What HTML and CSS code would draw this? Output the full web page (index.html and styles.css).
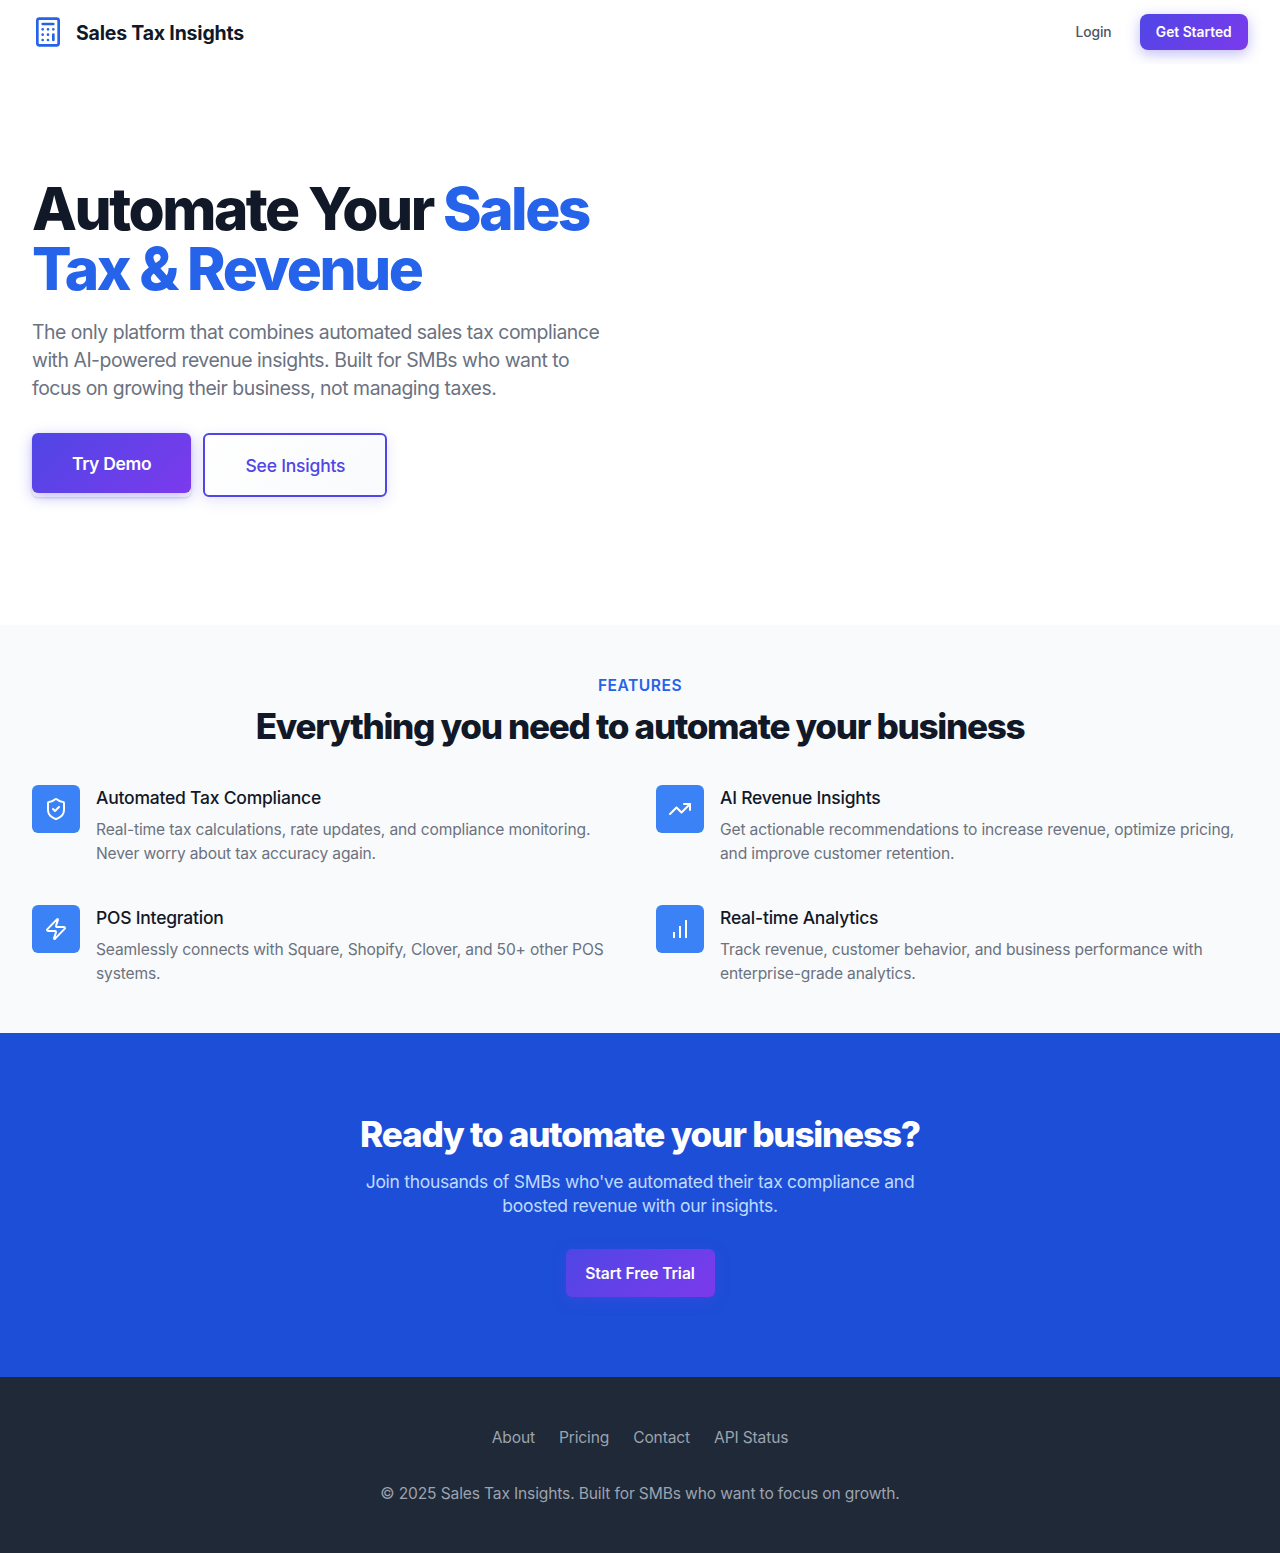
FILE: index.html
```html
<!DOCTYPE html>
<html lang="en">
<head>
<meta charset="utf-8">
<title>Sales Tax Insights</title>
<link rel="stylesheet" href="styles.css">
</head>
<body>
<header class="nav">
  <a class="brand" href="#">
    <svg class="brand-icon" viewBox="0 0 24 24"><rect x="4" y="2" width="16" height="20" rx="1.6"/><path d="M8 6h8M16 14v4M16 10h.01M12 10h.01M8 10h.01M12 14h.01M8 14h.01M12 18h.01M8 18h.01"/></svg>
    <span class="brand-name">Sales Tax Insights</span>
  </a>
  <nav class="nav-actions">
    <a class="login" href="#">Login</a>
    <a class="btn btn-small" href="#">Get Started</a>
  </nav>
</header>
<main>
  <section class="hero">
    <div class="hero-copy">
      <h1 class="hero-title">Automate Your <span class="accent">Sales<br>Tax &amp; Revenue</span></h1>
      <p class="hero-text">The only platform that combines automated sales tax compliance<br>with AI-powered revenue insights. Built for SMBs who want to<br>focus on growing their business, not managing taxes.</p>
      <div class="hero-actions">
        <div class="btn-shell"><a class="btn btn-large" href="#">Try Demo</a></div>
        <a class="btn-outline" href="#">See Insights</a>
      </div>
    </div>
  </section>
  <section class="features">
    <p class="eyebrow">FEATURES</p>
    <h2 class="section-title">Everything you need to automate your business</h2>
    <div class="feature-grid">
      <article class="feature">
        <span class="tile"><svg viewBox="0 0 24 24"><path d="M20 13c0 5-3.500 7.500-7.660 8.950a1 1 0 0 1-.67-.01C7.500 20.500 4 18 4 13V6a1 1 0 0 1 1-1c2 0 4.500-1.200 6.240-2.720a1.170 1.170 0 0 1 1.520 0C14.510 3.810 17 5 19 5a1 1 0 0 1 1 1z"/><path d="m9 12 2 2 4-4"/></svg></span>
        <div><h3 class="feature-title">Automated Tax Compliance</h3><p class="feature-text">Real-time tax calculations, rate updates, and compliance monitoring.<br>Never worry about tax accuracy again.</p></div>
      </article>
      <article class="feature">
        <span class="tile"><svg viewBox="0 0 24 24"><path d="m22 7-8.500 8.500-5-5L2 17"/><path d="M16 7h6v6"/></svg></span>
        <div><h3 class="feature-title">AI Revenue Insights</h3><p class="feature-text">Get actionable recommendations to increase revenue, optimize pricing,<br>and improve customer retention.</p></div>
      </article>
      <article class="feature">
        <span class="tile"><svg viewBox="0 0 24 24"><path d="M4 14a1 1 0 0 1-.78-1.630l9.900-10.200a.5.5 0 0 1 .86.460l-1.920 6.020A1 1 0 0 0 13 10h7a1 1 0 0 1 .78 1.630l-9.900 10.200a.5.5 0 0 1-.86-.460l1.920-6.020A1 1 0 0 0 11 14z"/></svg></span>
        <div><h3 class="feature-title">POS Integration</h3><p class="feature-text">Seamlessly connects with Square, Shopify, Clover, and 50+ other POS<br>systems.</p></div>
      </article>
      <article class="feature">
        <span class="tile"><svg viewBox="0 0 24 24"><path class="bars" d="M6 21v-6M12 21V9M18 21V3"/></svg></span>
        <div><h3 class="feature-title">Real-time Analytics</h3><p class="feature-text">Track revenue, customer behavior, and business performance with<br>enterprise-grade analytics.</p></div>
      </article>
    </div>
  </section>
  <section class="cta">
    <h2 class="cta-title">Ready to automate your business?</h2>
    <p class="cta-text">Join thousands of SMBs who've automated their tax compliance and<br>boosted revenue with our insights.</p>
    <a class="btn btn-medium" href="#">Start Free Trial</a>
  </section>
</main>
<footer class="footer">
  <nav class="footer-links"><a href="#">About</a><a href="#">Pricing</a><a href="#">Contact</a><a href="#">API Status</a></nav>
  <p class="copyright">© 2025 Sales Tax Insights. Built for SMBs who want to focus on growth.</p>
</footer>
</body>
</html>
```
FILE: styles.css
```css
* { box-sizing: border-box; margin: 0; padding: 0; }
body { font: 400 15.6px/24px Inter, "Liberation Sans", sans-serif; color: #111827; background: #fff; }
a { color: inherit; text-decoration: none; }
svg { fill: none; stroke: currentColor; stroke-width: 2; stroke-linecap: round; stroke-linejoin: round; }

.nav { height: 64px; padding: 0 32px; display: flex; align-items: center; justify-content: space-between; }
.brand { display: flex; align-items: center; gap: 12px; }
.brand-icon { width: 32px; height: 32px; color: #2563eb; }
.brand-name { font-size: 19.5px; line-height: 28px; font-weight: 650; letter-spacing: -0.2px; padding-top: 2px; }
.nav-actions { display: flex; align-items: center; gap: 28px; }
.login { font-size: 13.8px; font-weight: 500; color: #4b5563; letter-spacing: -0.1px; }

.btn { display: flex; align-items: center; justify-content: center; color: #fff; background: linear-gradient(135deg, #4f46e5, #7c3aed); box-shadow: 0 4px 14px rgba(79, 70, 229, .36); border-radius: 6px; font-weight: 560; }
.btn-small { width: 108.5px; height: 36px; border-radius: 8px; font-size: 13.8px; font-weight: 600; }
.btn-large { width: 159.4px; height: 60px; padding-top: 2px; font-size: 17.5px; letter-spacing: -0.3px; }
.btn-medium { width: 149px; height: 48px; padding-top: 2px; font-size: 15.6px; letter-spacing: -0.05px; }
.btn-outline { width: 184px; height: 64px; padding-top: 2px; display: flex; align-items: center; justify-content: center; border: 2px solid #4f46e5; border-radius: 6px; color: #4f46e5; background: linear-gradient(135deg, #fff, #f8fafc); box-shadow: 0 4px 14px rgba(79, 70, 229, .15); font-size: 17.5px; font-weight: 540; letter-spacing: -0.2px; }
.btn-shell { border-radius: 6px; box-shadow: 0 1px 3px rgba(0, 0, 0, .1), 0 1px 2px rgba(0, 0, 0, .06); }

.hero { position: relative; height: 561px; padding: 115px 32px 0; background: #fff; }
.hero-title { font-size: 58.5px; line-height: 60px; font-weight: 820; letter-spacing: -2.5px; }
.accent { color: #2563eb; }
.hero-text { margin-top: 19px; font-size: 19.4px; line-height: 28px; color: #6b7280; letter-spacing: -0.47px; }
.hero-actions { margin-top: 31px; display: flex; gap: 12px; }

.features { padding: 49px 32px 48px; background: #f9fafb; }
.eyebrow { text-align: center; color: #2563eb; font-weight: 600; letter-spacing: .5px; }
.section-title { margin-top: 8px; text-align: center; font-size: 35.1px; line-height: 40px; font-weight: 800; letter-spacing: -1.3px; }
.feature-grid { margin-top: 39px; display: grid; grid-template-columns: 1fr 1fr; gap: 40px 32px; }
.feature { height: 80px; display: flex; gap: 16px; }
.tile { width: 48px; height: 48px; flex: none; display: flex; align-items: center; justify-content: center; border-radius: 6px; background: #3b82f6; color: #fff; }
.tile svg { width: 24px; height: 24px; }
.bars { stroke-linecap: butt; }
.feature-title { padding-top: 1px; font-size: 17.5px; line-height: 24px; font-weight: 520; letter-spacing: -0.22px; }
.feature-text { margin-top: 8px; color: #6b7280; letter-spacing: -0.15px; white-space: nowrap; }

.cta { height: 344px; padding-top: 81px; display: flex; flex-direction: column; align-items: center; text-align: center; background: #1d4ed8; }
.cta-title { color: #fff; font-size: 35.1px; line-height: 40px; font-weight: 800; letter-spacing: -1.2px; }
.cta-text { margin: 16px 0 31px; font-size: 17.5px; color: #bfdbfe; letter-spacing: -0.28px; }

.footer { height: 176px; padding: 49px 32px 47px; text-align: center; background: #1f2937; color: #9ca3af; letter-spacing: -0.15px; }
.footer-links { display: flex; justify-content: center; gap: 24px; }
.copyright { margin-top: 32px; }
```
